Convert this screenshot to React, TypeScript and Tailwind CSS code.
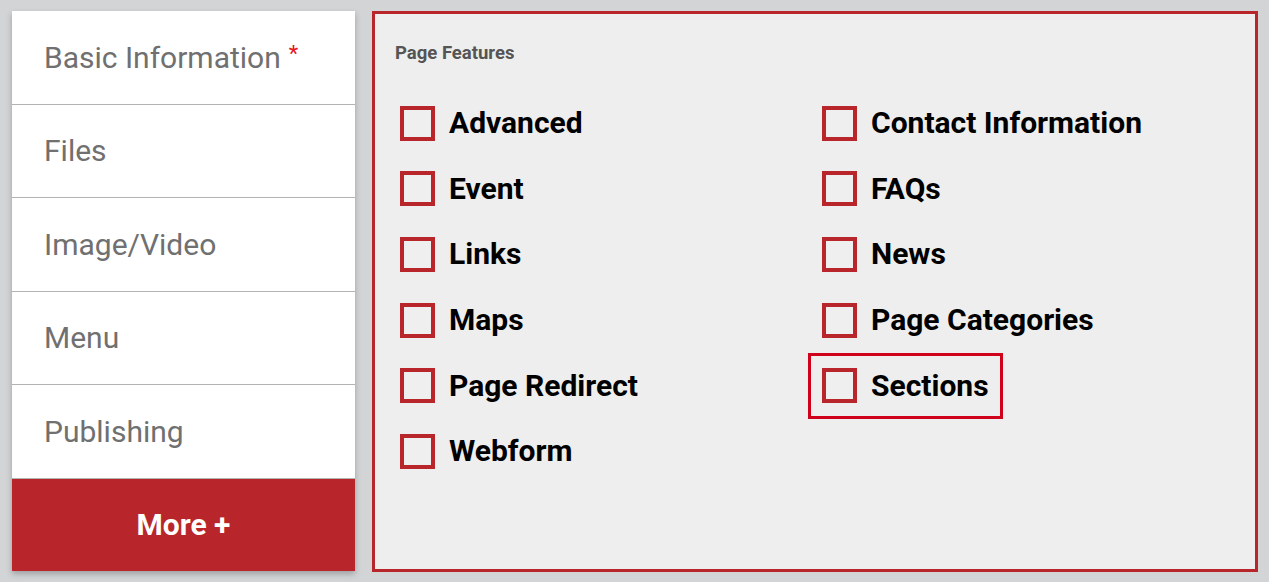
import React from "react";

const left = [
  { label: "Basic Information", req: true },
  { label: "Files" },
  { label: "Image/Video" },
  { label: "Menu" },
  { label: "Publishing" },
];

const col1 = ["Advanced", "Event", "Links", "Maps", "Page Redirect", "Webform"];
const col2 = ["Contact Information", "FAQs", "News", "Page Categories", "Sections"];

function Item({ label, focused }: { label: string; focused?: boolean }) {
  return (
    <div className="h-[65.7px] flex items-start">
      <label
        className={
          "flex items-center gap-[14px] -ml-[14px] px-[11px] h-[66px] border-[3px] shrink-0 " +
          (focused ? "border-[#d0021b]" : "border-transparent")
        }
      >
        <span className="w-[35px] h-[35px] border-[4px] border-[#b8262c] bg-[#efefef] shrink-0" />
        <span className="text-[30px] font-bold text-black leading-none">{label}</span>
      </label>
    </div>
  );
}

export default function App() {
  return (
    <div
      className="w-[1269px] h-[582px] bg-[#d3d4d6] flex gap-[17px] pl-[12px] pt-[11px]"
      style={{ fontFamily: "Roboto, 'Liberation Sans', sans-serif" }}
    >
      <div className="w-[343px] h-[560px] bg-white flex flex-col shadow-[0_3px_6px_rgba(0,0,0,0.25)]">
        {left.map((it) => (
          <div
            key={it.label}
            className="flex-1 flex items-center pl-[32px] border-b border-[#b3b3b3] text-[30px] text-[#707070]"
          >
            {it.label}
            {it.req && <span className="text-[#e8141c] ml-[8px] text-[22px] self-center -mt-[8px]">*</span>}
          </div>
        ))}
        <div className="flex-1 flex items-center justify-center bg-[#b8252b] text-white text-[30px] font-bold">
          More +
        </div>
      </div>
      <div className="w-[886px] h-[561px] border-[3px] border-[#b8252b] bg-[#eeeeee] pl-[20px] pt-[29px]">
        <div className="text-[18.5px] font-bold text-[#555555] leading-[21px]">Page Features</div>
        <div className="flex mt-[26px] pl-[5px]">
          <div className="w-[422px] flex flex-col">
            {col1.map((l) => (
              <Item key={l} label={l} />
            ))}
          </div>
          <div className="w-[422px] flex flex-col">
            {col2.map((l) => (
              <Item key={l} label={l} focused={l === "Sections"} />
            ))}
          </div>
        </div>
      </div>
    </div>
  );
}
